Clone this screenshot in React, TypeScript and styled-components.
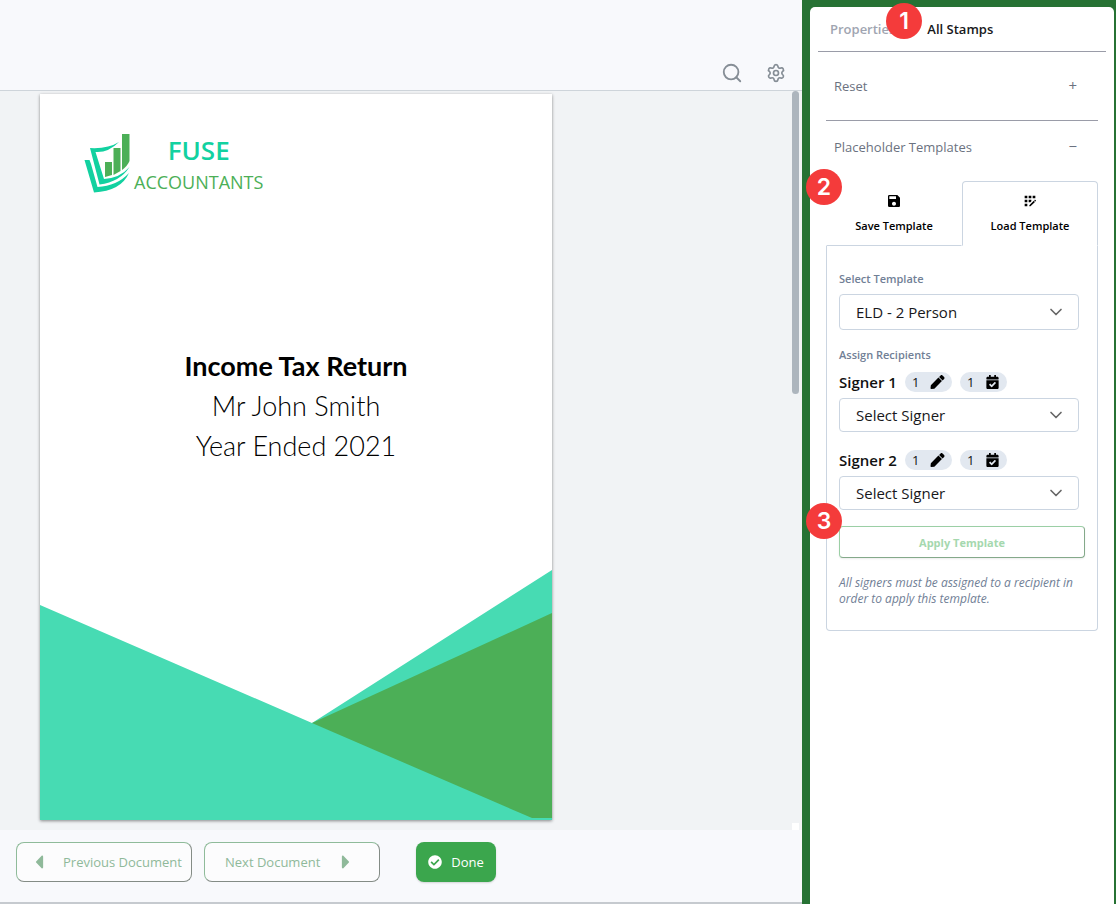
import React from "react";
import styled, { createGlobalStyle } from "styled-components";
import { FiSearch, FiChevronDown } from "react-icons/fi";
import { Settings } from "lucide-react";
import { FaPen, FaCalendarCheck, FaCheckCircle, FaCaretLeft, FaCaretRight } from "react-icons/fa";
import { MdSave, MdAppRegistration } from "react-icons/md";

const GlobalStyle = createGlobalStyle`
  *, *::before, *::after { box-sizing: border-box; }
  body {
    margin: 0;
    background: #f8f9fc;
    font-family: "Open Sans", "Noto Sans", sans-serif;
    color: #111;
  }
  button, select { font-family: inherit; }
  h1, h2, p { margin: 0; }
`;

const Screen = styled.div`
  display: flex;
  min-height: 100vh;
`;

const Workspace = styled.main`
  flex: 1;
  min-width: 0;
  display: flex;
  flex-direction: column;
  background: #f8f9fc;
  border-bottom: 2px solid #c6cacf;
`;

const Toolbar = styled.header`
  display: flex;
  justify-content: flex-end;
  align-items: flex-end;
  gap: 23px;
  height: 91px;
  padding: 0 16px 7px;
  border-bottom: 1px solid #ced4da;
`;

const ToolButton = styled.button`
  display: flex;
  align-items: center;
  height: 20px;
  padding: 0;
  border: 0;
  background: none;
  color: #868e96;
`;

const Viewer = styled.section`
  flex: 1;
  display: flex;
  justify-content: space-between;
  padding-right: 2px;
  background: #f1f3f5;
`;

const Sheet = styled.article`
  display: flex;
  flex-direction: column;
  width: 512px;
  height: 726px;
  margin: 3px 0 9px 40px;
  background: #fff;
  box-shadow: 0 1px 3px rgba(0, 0, 0, 0.45);
`;

const Brand = styled.div`
  display: flex;
  gap: 4px;
  padding: 38px 0 0 44px;
`;

const BrandName = styled.div`
  display: flex;
  flex-direction: column;
  align-items: center;
`;

const BrandTop = styled.span`
  font-size: 26px;
  line-height: 36px;
  font-weight: 600;
  color: #12d1a0;
`;

const BrandBottom = styled.span`
  font-size: 18px;
  line-height: 28px;
  color: #4caf57;
`;

const Title = styled.div`
  flex: 1;
  padding-top: 150px;
  text-align: center;
  font-family: Lato, sans-serif;
  font-size: 27px;
  line-height: 40px;
  font-weight: 300;
  color: #000;
`;

const Heading = styled.h1`
  font-size: 27px;
  line-height: 40px;
  font-weight: 700;
`;

const CoverArt = styled.svg`
  display: block;
  width: 100%;
  height: 250px;
`;

const ScrollTrack = styled.div`
  display: flex;
  flex-direction: column;
  justify-content: space-between;
  width: 8px;
`;

const ScrollThumb = styled.div`
  height: 303px;
  width: 7px;
  border-radius: 4px;
  background: #adb5bd;
`;

const ScrollCorner = styled.div`
  height: 7px;
  width: 7px;
  background: #fff;
`;

const Footer = styled.footer`
  display: flex;
  gap: 12px;
  padding: 12px 16px 20px;
`;

const NavButton = styled.button`
  display: flex;
  align-items: center;
  gap: 16px;
  width: 176px;
  height: 40px;
  padding: 0 0 0 14px;
  border: 1px solid;
  border-color: #8fbb9a #848c86 #848c86 #8fbb9a;
  border-radius: 8px;
  background: #fcfcfd;
  color: #8fb99a;
  font-size: 13px;
  white-space: nowrap;
  svg { width: 16px; height: 22px; flex: none; }
`;

const NextButton = styled(NavButton)`
  gap: 18px;
  padding-left: 20px;
`;

const DoneButton = styled.button`
  display: flex;
  align-items: center;
  justify-content: center;
  gap: 9px;
  width: 80px;
  height: 40px;
  margin-left: 24px;
  padding: 0;
  border: 0;
  border-radius: 8px;
  background: #3ba64d;
  color: #fff;
  font-size: 13px;
  box-shadow: 0 1px 2px rgba(0, 0, 0, 0.15);
  svg { width: 14px; height: 14px; }
`;

const Sidebar = styled.aside`
  flex: none;
  display: flex;
  width: 314px;
  padding: 7px 2px 0 8px;
  background: #277234;
`;

const Panel = styled.div`
  flex: 1;
  padding: 0 8px;
  border-radius: 5px 5px 0 0;
  background: #fff;
`;

const TabBar = styled.nav`
  position: relative;
  display: flex;
  gap: 32px;
  height: 45px;
  padding: 0 12px;
  border-bottom: 1px solid #9a9ca8;
`;

const TabButton = styled.button<{ $active?: boolean }>`
  padding: 0;
  border: 0;
  background: none;
  font-size: 13px;
  font-weight: 600;
  color: ${(p) => (p.$active ? "#18181b" : "#a0a5b1")};
`;

const Badge = styled.span<{ $left: number; $top: number }>`
  position: absolute;
  z-index: 1;
  left: ${(p) => p.$left}px;
  top: ${(p) => p.$top}px;
  width: 36px;
  height: 36px;
  border-radius: 50%;
  background: #f43b3b;
  color: #fff;
  font-family: Inter, sans-serif;
  font-size: 23px;
  font-weight: 600;
  line-height: 36px;
  text-align: center;
`;

const Sections = styled.div`
  padding: 0 8px;
`;

const SectionHeader = styled.button<{ $divided?: boolean }>`
  display: flex;
  justify-content: space-between;
  align-items: center;
  width: 100%;
  height: ${(p) => (p.$divided ? 69 : 52)}px;
  padding: 0 21px 0 8px;
  border: 0;
  border-bottom: ${(p) => (p.$divided ? "1px solid #9a9ca8" : "0")};
  background: none;
  color: #6b7280;
  font-size: 13px;
`;

const SectionSign = styled.span`
  padding-bottom: 3px;
  font-size: 15px;
`;

const Templates = styled.div`
  position: relative;
  margin-top: 8px;
`;

const TemplateTabs = styled.div`
  display: flex;
`;

const TemplateTab = styled.button<{ $active?: boolean }>`
  flex: 1;
  display: flex;
  flex-direction: column;
  align-items: center;
  gap: 8px;
  height: 65px;
  padding: 11px 0 0;
  border: 1px solid #cbd5e1;
  border-color: ${(p) => (p.$active ? "#cbd5e1 #cbd5e1 transparent" : "transparent transparent #cbd5e1")};
  border-radius: ${(p) => (p.$active ? "4px 4px 0 0" : "0")};
  background: none;
  color: #000;
  font-size: 11px;
  line-height: 18px;
  font-weight: 600;
  svg { width: 16px; height: 16px; }
`;

const TemplateBody = styled.div`
  display: flex;
  flex-direction: column;
  padding: 24px 12px 23px;
  border: 1px solid #cbd5e1;
  border-top: 0;
  border-radius: 0 0 4px 4px;
`;

const FieldLabel = styled.label`
  font-size: 11px;
  line-height: 18px;
  font-weight: 600;
  color: #718096;
`;

const SelectBox = styled.div<{ $tall?: boolean }>`
  position: relative;
  height: ${(p) => (p.$tall ? 36 : 34)}px;
  margin: ${(p) => (p.$tall ? "6px 6px 16px 0" : "5px 6px 10px 0")};
  svg {
    position: absolute;
    right: 13px;
    top: 50%;
    margin-top: -10px;
    pointer-events: none;
    color: #666;
  }
`;

const Select = styled.select`
  appearance: none;
  width: 100%;
  height: 100%;
  padding: 0 36px 0 16px;
  border: 1px solid #cbd5e1;
  border-radius: 4px;
  background: #fff;
  color: #18181b;
  font-size: 15px;
`;

const SignerRow = styled.div`
  display: flex;
  align-items: center;
  gap: 8px;
  height: 22px;
  margin-top: 7px;
`;

const SignerName = styled.label`
  font-size: 15px;
  font-weight: 600;
`;

const Count = styled.span`
  display: flex;
  align-items: center;
  justify-content: space-between;
  width: 47px;
  height: 20px;
  padding: 0 7px;
  border-radius: 10px;
  background: #e2e8f0;
  font-size: 13px;
  svg { width: 15px; height: 14px; color: #000; }
`;

const ApplyButton = styled.button`
  height: 32px;
  margin-top: 6px;
  border: 1px solid;
  border-color: #9bcfa5 #84a98a #84a98a #9bcfa5;
  border-radius: 4px;
  background: #fff;
  color: #a5d8ae;
  font-size: 11px;
  font-weight: 700;
  box-shadow: 0 1px 2px rgba(0, 0, 0, 0.08);
`;

const Note = styled.p`
  margin: 17px 0 0;
  font-size: 12px;
  line-height: 16px;
  font-style: italic;
  color: #718096;
`;

function BrandMark() {
  return (
    <svg width="46" height="62" viewBox="84 132 46 62" aria-hidden="true">
      <g fill="#4caf57">
        <path d="M105 162h7v13l-7 2z" />
        <path d="M113.500 148h7v23l-7 4z" />
        <path d="M122 134h7.500v27q-2 5-7.500 9z" />
      </g>
      <g fill="#12d1a0">
        <path d="M119 142Q108 149 90 148L99.500 184.500Q120 182 129.500 167Q120 178 104 179L95.500 152Q108 153 119 142z" />
        <path d="M89.500 160H84.500L94 192.500Q121 191 129 173Q117 186 97.500 187L91 164z" />
      </g>
    </svg>
  );
}

function Signer({ id, name }: { id: string; name: string }) {
  return (
    <>
      <SignerRow>
        <SignerName htmlFor={id}>{name}</SignerName>
        <Count>1 <FaPen /></Count>
        <Count>1 <FaCalendarCheck /></Count>
      </SignerRow>
      <SelectBox>
        <Select id={id}>
          <option>Select Signer</option>
        </Select>
        <FiChevronDown size={20} strokeWidth={2} />
      </SelectBox>
    </>
  );
}

export default function App() {
  return (
    <Screen>
      <GlobalStyle />
      <Workspace>
        <Toolbar>
          <ToolButton aria-label="Search"><FiSearch size={22} /></ToolButton>
          <ToolButton aria-label="Settings"><Settings size={20} /></ToolButton>
        </Toolbar>
        <Viewer>
          <Sheet>
            <Brand>
              <BrandMark />
              <BrandName>
                <BrandTop>FUSE</BrandTop>
                <BrandBottom>ACCOUNTANTS</BrandBottom>
              </BrandName>
            </Brand>
            <Title>
              <Heading>Income Tax Return</Heading>
              <p>Mr John Smith</p>
              <p>Year Ended 2021</p>
            </Title>
            <CoverArt viewBox="0 0 512 250" preserveAspectRatio="none" aria-hidden="true">
              <path fill="#47dbb3" d="M0 35L272 153L512 0V250H0z" />
              <path fill="#4caf57" d="M272 153L512 43V248H492z" />
            </CoverArt>
          </Sheet>
          <ScrollTrack>
            <ScrollThumb />
            <ScrollCorner />
          </ScrollTrack>
        </Viewer>
        <Footer>
          <NavButton><FaCaretLeft />Previous Document</NavButton>
          <NextButton>Next Document<FaCaretRight /></NextButton>
          <DoneButton><FaCheckCircle />Done</DoneButton>
        </Footer>
      </Workspace>
      <Sidebar>
        <Panel>
          <TabBar>
            <TabButton>Properties</TabButton>
            <TabButton $active>All Stamps</TabButton>
            <Badge $left={68} $top={-4}>1</Badge>
          </TabBar>
          <Sections>
            <SectionHeader $divided><span>Reset</span><SectionSign>+</SectionSign></SectionHeader>
            <SectionHeader><span>Placeholder Templates</span><SectionSign>−</SectionSign></SectionHeader>
            <Templates>
              <Badge $left={-20} $top={-12}>2</Badge>
              <Badge $left={-20} $top={322}>3</Badge>
              <TemplateTabs>
                <TemplateTab><MdSave />Save Template</TemplateTab>
                <TemplateTab $active><MdAppRegistration />Load Template</TemplateTab>
              </TemplateTabs>
              <TemplateBody>
                <FieldLabel htmlFor="template">Select Template</FieldLabel>
                <SelectBox $tall>
                  <Select id="template">
                    <option>ELD - 2 Person</option>
                  </Select>
                  <FiChevronDown size={20} strokeWidth={2} />
                </SelectBox>
                <FieldLabel as="h2">Assign Recipients</FieldLabel>
                <Signer id="signer-1" name="Signer 1" />
                <Signer id="signer-2" name="Signer 2" />
                <ApplyButton>Apply Template</ApplyButton>
                <Note>All signers must be assigned to a recipient in order to apply this template.</Note>
              </TemplateBody>
            </Templates>
          </Sections>
        </Panel>
      </Sidebar>
    </Screen>
  );
}
